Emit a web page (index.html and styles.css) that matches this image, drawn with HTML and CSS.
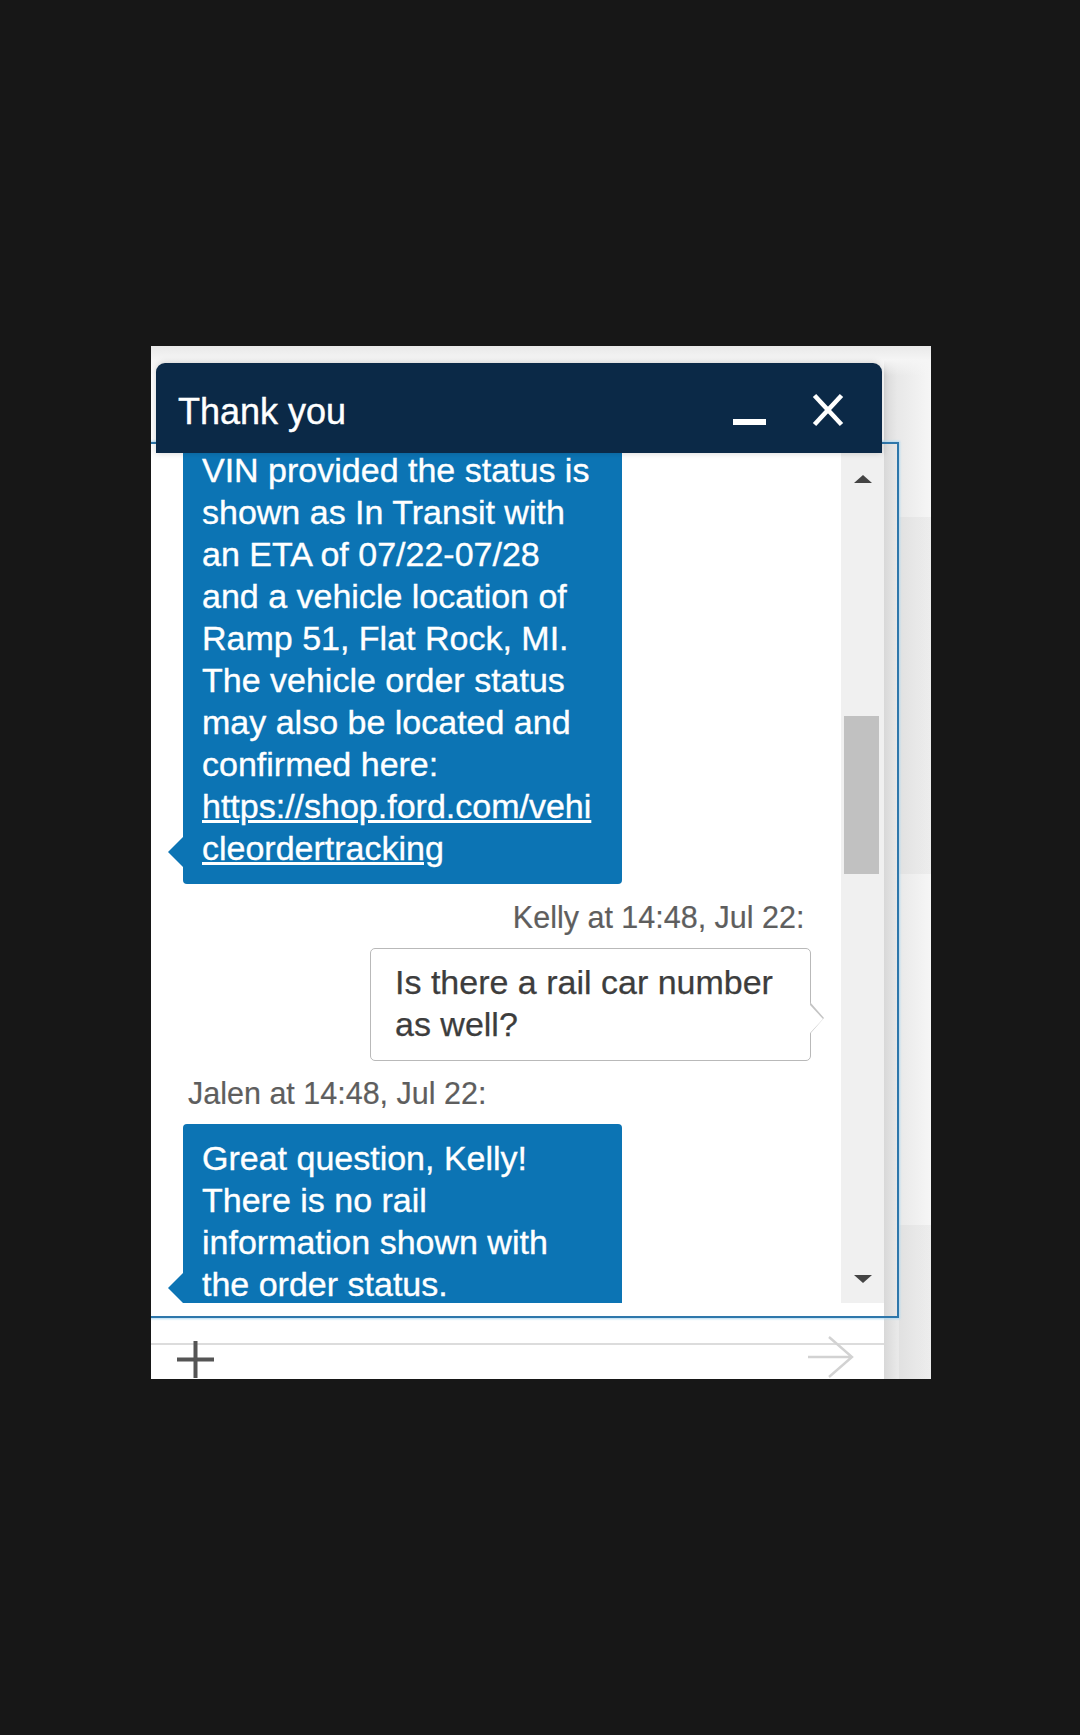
FILE: index.html
```html
<!DOCTYPE html>
<html lang="en">
<head>
<meta charset="utf-8">
<title>Chat</title>
<link rel="stylesheet" href="styles.css">
</head>
<body>
<div class="stage">
  <div class="panel">
    <div class="header">
      <div class="title">Thank you</div>
      <div class="min"></div>
      <svg class="close" width="32" height="34" viewBox="0 0 32 34">
        <line x1="2.5" y1="2.5" x2="29.5" y2="31.5" stroke="#fff" stroke-width="4.6"/>
        <line x1="29.5" y1="2.5" x2="2.5" y2="31.5" stroke="#fff" stroke-width="4.6"/>
      </svg>
    </div>
    <div class="frame">
      <div class="msgrow">
        <div class="list">
          <div class="bubble agent first">VIN provided the status is shown as In Transit with an ETA of 07/22-07/28 and a vehicle location of Ramp 51, Flat Rock, MI. The vehicle order status may also be located and confirmed here: <a class="link" href="#">https://shop.ford.com/vehicleordertracking</a></div>
          <div class="meta right">Kelly at 14:48, Jul 22:</div>
          <div class="bubble user">Is there a rail car number as well?</div>
          <div class="meta left">Jalen at 14:48, Jul 22:</div>
          <div class="bubble agent second">Great question, Kelly! There is no rail information shown with the order status.</div>
        </div>
        <div class="track">
          <div class="arrow-up"></div>
          <div class="thumb"></div>
          <div class="arrow-down"></div>
        </div>
      </div>
    </div>
    <div class="composer">
      <svg class="plus" width="37" height="37" viewBox="0 0 37 37">
        <rect x="0" y="16.5" width="37" height="4" fill="#555"/>
        <rect x="16.5" y="0" width="4" height="37" fill="#555"/>
      </svg>
      <svg class="send" width="46" height="42" viewBox="0 0 46 42">
        <path d="M0 21 H44 M21 1 L44 21 L21 41" fill="none" stroke="#d2d2d2" stroke-width="2.4"/>
      </svg>
    </div>
  </div>
</div>
</body>
</html>
```

FILE: styles.css
```css
html, body {
  margin: 0;
  padding: 0;
}

body {
  background: #171717;
  font-family: "Liberation Sans", Arial, sans-serif;
}

.stage {
  height: 1735px;
  box-sizing: border-box;
  padding: 346px 0 0 151px;
}

.panel {
  width: 780px;
  height: 1033px;
  overflow: hidden;
  background:
    linear-gradient(to bottom, #e9e9e9 0, #f5f5f5 14px, rgba(255,255,255,0) 30px),
    linear-gradient(to bottom, rgba(0,0,0,0) 171px, rgba(0,0,0,0.035) 171px, rgba(0,0,0,0.035) 528px, rgba(0,0,0,0) 528px, rgba(0,0,0,0) 879px, rgba(0,0,0,0.035) 879px) 748px 0 / 32px 100% no-repeat,
    linear-gradient(to right, #fff 0, #fff 733px, #d8d8d8 733px, #e8e8e8 746px, #f6f6f6 780px);
}

.header {
  margin: 17px 0 0 5px;
  width: 726px;
  height: 90px;
  box-sizing: border-box;
  background: #0b2947;
  border-radius: 9px 9px 0 0;
  display: flex;
  align-items: flex-start;
  padding: 0 38px 0 22px;
  position: relative;
  z-index: 1;
  box-shadow: 0 0 7px rgba(0, 0, 0, 0.18);
}

.title {
  flex: 1;
  color: #fff;
  font-size: 36px;
  line-height: 40px;
  margin-top: 29px;
  -webkit-text-stroke: 0.4px #fff;
}

.min {
  width: 33px;
  height: 6px;
  background: #fff;
  margin-top: 56px;
  margin-right: 46px;
}

.close {
  display: block;
  margin-top: 30px;
}

.frame {
  margin: -11px 0 0 -10px;
  width: 758px;
  height: 876px;
  box-sizing: border-box;
  border: 2px solid #2e77ab;
  background: linear-gradient(to right, #fff 741px, rgba(255,255,255,0) 741px);
  box-shadow: 0 0 2px 1px #b4dbf2;
}

.msgrow {
  display: flex;
  height: 859px;
}

.list {
  width: 698px;
  overflow: hidden;
  background: #fff;
  display: flex;
  flex-direction: column;
  align-items: flex-start;
}

.bubble {
  position: relative;
  box-sizing: border-box;
  font-size: 34px;
  line-height: 42px;
  overflow-wrap: break-word;
  flex-shrink: 0;
}

.agent {
  margin-left: 40px;
  width: 439px;
  padding: 12.5px 24px 15px 19px;
  background: #0c74b4;
  color: #fff;
  border-radius: 4px;
  -webkit-text-stroke: 0.35px #fff;
}

.agent::before {
  content: "";
  position: absolute;
  left: -15px;
  bottom: 17px;
  border-right: 15px solid #0c74b4;
  border-top: 15px solid transparent;
  border-bottom: 15px solid transparent;
}

.agent.first {
  margin-top: -7.5px;
}

.agent.second {
  margin-top: 13px;
}

.link {
  color: #fff;
  text-decoration: underline;
}

.meta {
  font-size: 30.5px;
  line-height: 36px;
  color: #5e5e5e;
  flex-shrink: 0;
  -webkit-text-stroke: 0.2px #5e5e5e;
}

.meta.right {
  align-self: flex-end;
  margin-right: 36.5px;
  margin-top: 15px;
}

.meta.left {
  margin-left: 45px;
  margin-top: 14px;
}

.user {
  align-self: flex-end;
  margin-right: 30px;
  margin-top: 13px;
  width: 441px;
  border: 1px solid #b9b9b9;
  border-radius: 5px;
  background: #fff;
  color: #3d3d3d;
  padding: 11.5px 20px 15.5px 24px;
  -webkit-text-stroke: 0.25px #3d3d3d;
}

.user::before {
  content: "";
  position: absolute;
  right: -14px;
  bottom: 26px;
  border-left: 14px solid #c4c4c4;
  border-top: 16px solid transparent;
  border-bottom: 16px solid transparent;
}

.user::after {
  content: "";
  position: absolute;
  right: -12.5px;
  bottom: 27.5px;
  border-left: 13px solid #fff;
  border-top: 14.5px solid transparent;
  border-bottom: 14.5px solid transparent;
}

.track {
  width: 43px;
  background: #f0f0f0;
  display: flex;
  flex-direction: column;
  align-items: center;
}

.arrow-up {
  margin-top: 31px;
  width: 0;
  height: 0;
  border-left: 9px solid transparent;
  border-right: 9px solid transparent;
  border-bottom: 8px solid #444;
}

.thumb {
  align-self: flex-start;
  margin-left: 3px;
  margin-top: 233px;
  width: 35px;
  height: 158px;
  background: #c1c1c1;
}

.arrow-down {
  margin-top: auto;
  margin-bottom: 20px;
  width: 0;
  height: 0;
  border-left: 9px solid transparent;
  border-right: 9px solid transparent;
  border-top: 8px solid #444;
}

.composer {
  height: 61px;
  box-sizing: border-box;
  display: flex;
  justify-content: space-between;
  align-items: flex-start;
  padding: 18px 77px 0 25.5px;
  background: linear-gradient(#dcdcdc, #dcdcdc) 0 25px / 733px 2px no-repeat;
}

.plus {
  display: block;
  margin-top: 4.5px;
}

.send {
  display: block;
}
```
